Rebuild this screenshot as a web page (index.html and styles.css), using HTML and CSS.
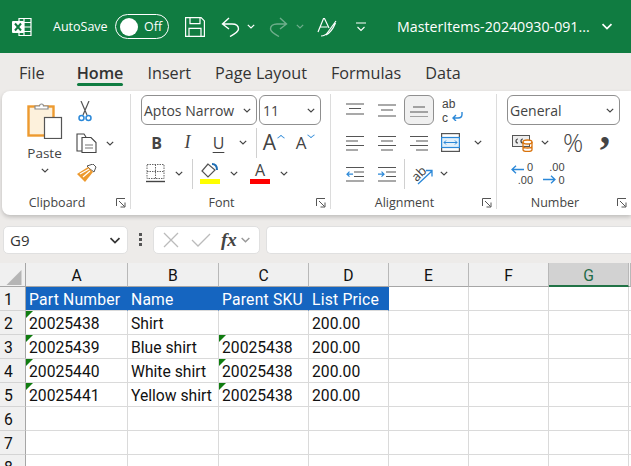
FILE: index.html
```html
<!DOCTYPE html>
<html lang="en">
<head>
    <meta charset="UTF-8">
    <title>MasterItems - Excel</title>
    <link rel="stylesheet" href="styles.css">
</head>
<body>
    <svg class="defs" width="0" height="0">
        <symbol id="chev" viewBox="0 0 8 5"><path d="M.8.8 4 4 7.2.8" fill="none" stroke="currentColor" stroke-width="1.2"/></symbol>
        <symbol id="launch" viewBox="0 0 10 10"><path d="M.5 8V.5H9M3 3l5.5 5.5M9 4.500v4.500H4.500" fill="none" stroke="#555" stroke-width="1"/></symbol>
    </svg>

    <header class="titlebar">
        <svg class="xl-icon" width="20" height="20" viewBox="0 0 20 20">
            <path d="M7 1.500h12v17H7zM12 1.500v17M12 5.500h7M12 10h7M12 14.500h7" fill="none" stroke="#fff" stroke-width="1.200"/>
            <rect x="0" y="4" width="12" height="12" rx="1" fill="#fff"/>
            <path d="M3 6.500 9 13.500M9 6.500 3 13.500" stroke="#107c41" stroke-width="2"/>
        </svg>
        <span class="autosave">AutoSave</span>
        <div class="toggle"><span class="knob"></span><span>Off</span></div>
        <svg class="save" width="20" height="20" viewBox="0 0 20 20" fill="none" stroke="#fff" stroke-width="1.200">
            <path d="M.6.6h15.500l3.300 3.300v15.500H.6zM5 .6v6h10v-6M4 19.400v-8h12v8"/>
        </svg>
        <svg class="undo" width="19" height="20" viewBox="0 0 19 20" fill="none" stroke="#fff" stroke-width="1.400">
            <path d="M8 1 1.500 7 8 12M1.500 7H11c4 0 6.500 2 6.500 5 0 2-2 4-8.500 7.500"/>
        </svg>
        <svg class="chev-w undo-chev" width="8" height="5"><use href="#chev"/></svg>
        <svg class="redo" width="19" height="20" viewBox="0 0 19 20" fill="none" stroke="#6fae8c" stroke-width="1.400">
            <path d="M11 1l6.500 6L11 12M17.500 7H8C4 7 1.500 9 1.500 12c0 2 2 4 8.500 7.500"/>
        </svg>
        <svg class="chev-dim redo-chev" width="8" height="5"><use href="#chev"/></svg>
        <svg class="draw" width="20" height="20" viewBox="0 0 20 20" fill="none" stroke="#fff" stroke-width="1.200">
            <path d="M1 15 6.500 1.500h1L12 11M3.500 10h7M4 19c3 0 5-1 7-4l8-11M9 18c4-2 7-6 9.500-12"/>
        </svg>
        <svg class="qat" width="12" height="10" viewBox="0 0 12 10" fill="none" stroke="#fff" stroke-width="1.100">
            <path d="M1 1h10M2.500 5 6 8.500 9.500 5"/>
        </svg>
        <span class="filename">MasterItems-20240930-091...</span>
        <svg class="chev-w file-chev" width="12" height="7"><use href="#chev"/></svg>
    </header>

    <nav class="tabs">
        <span>File</span>
        <span class="tab-active">Home</span>
        <span>Insert</span>
        <span>Page Layout</span>
        <span>Formulas</span>
        <span>Data</span>
    </nav>

    <section class="ribbon">
        <div class="group group-clip">
            <div class="clip-body">
                <div class="paste">
                    <svg width="36" height="38" viewBox="0 0 36 38">
                        <rect x="1.500" y="5.500" width="25" height="29" fill="#fdf1dc" stroke="#ed9a2f" stroke-width="2.400"/>
                        <path d="M8 8V5h4.500a2 2 0 0 1 4 0H21v3z" fill="#fff" stroke="#8a8a8a" stroke-width="1.200"/>
                        <rect x="17.500" y="16.500" width="17" height="21" fill="#fff" stroke="#555" stroke-width="1.200"/>
                    </svg>
                    <span class="paste-label">Paste</span>
                    <svg class="chev" width="8" height="5"><use href="#chev"/></svg>
                </div>
                <div class="clip-tools">
                    <svg class="cut" width="14" height="21" viewBox="0 0 14 21" fill="none">
                        <path d="M3 0l6 14M11 0 5 14" stroke="#555" stroke-width="1.200"/>
                        <circle cx="3.500" cy="17" r="2.500" stroke="#2b88d8" stroke-width="1.500"/>
                        <circle cx="10.500" cy="17" r="2.500" stroke="#2b88d8" stroke-width="1.500"/>
                    </svg>
                    <div class="copy-row">
                        <svg width="21" height="20" viewBox="0 0 21 20" fill="none" stroke="#444" stroke-width="1.100">
                            <path d="M6 18H1V1h7l2 3"/>
                            <path d="M6 4.500h9l5 5v10H6z" fill="#fff"/>
                            <path d="M9 12h8M9 15h8" stroke="#777"/>
                        </svg>
                        <svg class="chev" width="8" height="5"><use href="#chev"/></svg>
                    </div>
                    <svg class="brush" width="21" height="19" viewBox="0 0 21 19">
                        <path d="M14 5l-3-3 6-2 3 3-2 5z" fill="#fff" stroke="#555"/>
                        <path d="M12 3 1 10l8 8 8-10z" fill="#ed9a2f"/>
                        <path d="M4 10l9-5M7 13l7-6" stroke="#fff" stroke-width="1.200"/>
                    </svg>
                </div>
            </div>
            <div class="group-foot"><span class="group-label">Clipboard</span><svg class="launch" width="10" height="10"><use href="#launch"/></svg></div>
        </div>

        <div class="group group-font">
            <div class="select-row">
                <div class="select sel-font"><span>Aptos Narrow</span><svg width="8" height="5"><use href="#chev"/></svg></div>
                <div class="select sel-size"><span>11</span><svg width="8" height="5"><use href="#chev"/></svg></div>
            </div>
            <div class="tool-row font-row2">
                <b class="glyph">B</b>
                <i class="glyph glyph-i">I</i>
                <span class="glyph glyph-u">U</span>
                <svg width="8" height="5"><use href="#chev"/></svg>
                <span></span>
                <span class="sep"></span>
                <span class="grow">A<em class="up"></em></span>
                <span class="shrink">A<em class="down"></em></span>
            </div>
            <div class="tool-row font-row3">
                <svg width="19" height="19" viewBox="0 0 19 19" fill="none" stroke="#666">
                    <path d="M1 .5h17v14H1zM9.500 .5v14M1 7.500h17" stroke-dasharray="1.500 1"/>
                    <path d="M0 17.500h19" stroke="#444" stroke-width="1.400"/>
                </svg>
                <svg width="8" height="5"><use href="#chev"/></svg>
                <span></span>
                <span class="sep"></span>
                <span class="color-btn">
                    <svg width="18" height="15" viewBox="0 0 18 15" fill="none">
                        <path d="M7 1 1 8l6 6 7-7z" stroke="#555" stroke-width="1.200"/>
                        <path d="M11 1c3 0 5 2 5 6" stroke="#1f6fb5" stroke-width="2"/>
                    </svg>
                    <span class="swatch swatch-fill"></span>
                </span>
                <svg width="8" height="5"><use href="#chev"/></svg>
                <span class="color-btn">
                    <span class="fc-a">A</span>
                    <span class="swatch swatch-font"></span>
                </span>
                <svg width="8" height="5"><use href="#chev"/></svg>
            </div>
            <div class="group-foot"><span class="group-label">Font</span><svg class="launch" width="10" height="10"><use href="#launch"/></svg></div>
        </div>

        <div class="group group-align">
            <div class="tool-row align-row1">
                <svg width="18" height="14" viewBox="0 0 18 14" stroke="#555" stroke-width="1.200"><path d="M0 1h18M3 5.500h12M0 11h18"/></svg>
                <svg width="18" height="14" viewBox="0 0 18 14" stroke="#555" stroke-width="1.200"><path d="M0 2h18M3 7h12M0 13h18"/></svg>
                <span class="pressed"><svg width="18" height="14" viewBox="0 0 18 14" stroke="#555" stroke-width="1.200"><path d="M3 4h12M0 9h18M0 14h18"/></svg></span>
                <span class="wrap"><span class="wrap-text">ab<br>c</span>
                    <svg class="wrap-arrow" width="11" height="9" viewBox="0 0 11 9" fill="none" stroke="#2b88d8" stroke-width="1.400"><path d="M10 0v2.500C10 5 8 6 6 6H1M4 3 1 6l3 3"/></svg>
                </span>
            </div>
            <div class="tool-row align-row2">
                <svg width="18" height="16" viewBox="0 0 18 16" stroke="#555" stroke-width="1.200"><path d="M0 1.500h18M0 6h12M0 10.500h18M0 15h12"/></svg>
                <svg width="18" height="16" viewBox="0 0 18 16" stroke="#555" stroke-width="1.200"><path d="M0 1.500h18M3 6h12M0 10.500h18M3 15h12"/></svg>
                <svg width="18" height="16" viewBox="0 0 18 16" stroke="#555" stroke-width="1.200"><path d="M0 1.500h18M6 6h12M0 10.500h18M6 15h12"/></svg>
                <svg width="19" height="19" viewBox="0 0 19 19" fill="none">
                    <rect x=".6" y=".6" width="17.800" height="17.800" stroke="#555" stroke-width="1.200"/>
                    <rect x=".6" y="4.500" width="17.800" height="10" fill="#e3f0fa" stroke="#2b88d8" stroke-width="1.200"/>
                    <path d="M3 9.500h13M5 7.500l-2 2 2 2M14 7.500l2 2-2 2" stroke="#2b88d8"/>
                </svg>
                <svg width="8" height="5"><use href="#chev"/></svg>
            </div>
            <div class="tool-row align-row3">
                <svg width="18" height="16" viewBox="0 0 18 16" fill="none" stroke="#555" stroke-width="1.200"><path d="M0 1.500h18M8 6h10M8 10.500h10M0 15h18"/><path d="M7 8.200H1M3.500 5.700 1 8.200l2.500 2.500" stroke="#2b88d8"/></svg>
                <svg width="18" height="16" viewBox="0 0 18 16" fill="none" stroke="#555" stroke-width="1.200"><path d="M0 1.500h18M8 6h10M8 10.500h10M0 15h18"/><path d="M0 8.200h6M3.500 5.700 6 8.200l-2.500 2.500" stroke="#2b88d8"/></svg>
                <span class="sep"></span>
                <span class="orient"><span class="orient-text">ab</span>
                    <svg class="orient-arrow" width="16" height="16" viewBox="0 0 16 16" fill="none" stroke="#2b88d8" stroke-width="1.300"><path d="M1 15 15 2M9 1.500h6v6"/></svg>
                </span>
                <svg width="8" height="5"><use href="#chev"/></svg>
            </div>
            <div class="group-foot"><span class="group-label">Alignment</span><svg class="launch" width="10" height="10"><use href="#launch"/></svg></div>
        </div>

        <div class="group group-num">
            <div class="select-row">
                <div class="select sel-format"><span>General</span><svg width="8" height="5"><use href="#chev"/></svg></div>
            </div>
            <div class="tool-row num-row2">
                <svg width="21" height="18" viewBox="0 0 21 18" fill="none">
                    <rect x=".5" y="1.500" width="17" height="11" fill="#eee" stroke="#555"/>
                    <path d="M6 5a2 2 0 1 0 0 4M11 5a2 2 0 1 0 0 4" stroke="#444" stroke-width="1.200"/>
                    <ellipse cx="15.500" cy="8" rx="4.500" ry="2" fill="#fff" stroke="#d9730d" stroke-width="1.300"/>
                    <path d="M11 8v7.500c0 1 2 2 4.500 2s4.500-1 4.500-2V8M11 12c0 1 2 2 4.500 2s4.500-1 4.500-2" fill="none" stroke="#d9730d" stroke-width="1.300"/>
                </svg>
                <svg width="8" height="5"><use href="#chev"/></svg>
                <span class="percent">%</span>
                <span class="comma">,</span>
            </div>
            <div class="tool-row num-row3">
                <span class="dec"><span class="dec-top">0</span><span class="dec-bottom">.00</span>
                    <svg class="dec-arrow" width="13" height="9" viewBox="0 0 13 9" fill="none" stroke="#2b88d8" stroke-width="1.300"><path d="M13 4.500H1M5 .7 1 4.500l4 3.800"/></svg>
                </span>
                <span class="dec"><span class="dec-top">.00</span><span class="dec-bottom">0</span>
                    <svg class="dec-arrow dec-arrow-r" width="13" height="9" viewBox="0 0 13 9" fill="none" stroke="#2b88d8" stroke-width="1.300"><path d="M0 4.500h12M8 .7l4 3.800-4 3.800"/></svg>
                </span>
            </div>
            <div class="group-foot"><span class="group-label">Number</span><svg class="launch" width="10" height="10"><use href="#launch"/></svg></div>
        </div>
    </section>

    <section class="formulabar">
        <div class="namebox"><span>G9</span><svg width="12" height="7"><use href="#chev"/></svg></div>
        <div class="dots"><span></span><span></span><span></span></div>
        <div class="fxbox">
            <svg width="16" height="16" viewBox="0 0 16 16" stroke="#bbb" stroke-width="1.300"><path d="M1 1l14 14M15 1 1 15"/></svg>
            <svg width="20" height="14" viewBox="0 0 20 14" fill="none" stroke="#bbb" stroke-width="1.300"><path d="M1 7l6 6L19 1"/></svg>
            <span class="fx">fx</span>
            <svg class="fx-chev" width="11" height="6"><use href="#chev"/></svg>
        </div>
        <div class="formula-input"></div>
    </section>

    <main class="sheet">
        <div class="corner"><svg width="16" height="16" viewBox="0 0 16 16"><path d="M16 0v16H0z" fill="#b5b5b5"/></svg></div>
        <div class="col">A</div><div class="col">B</div><div class="col">C</div><div class="col">D</div><div class="col">E</div><div class="col">F</div><div class="col col-sel">G</div><div class="col"></div>

        <div class="row">1</div>
        <div class="cell head">Part Number</div><div class="cell head">Name</div><div class="cell head">Parent SKU</div><div class="cell head">List Price</div><div class="cell"></div><div class="cell"></div><div class="cell"></div><div class="cell"></div>

        <div class="row">2</div>
        <div class="cell flag">20025438</div><div class="cell">Shirt</div><div class="cell"></div><div class="cell">200.00</div><div class="cell"></div><div class="cell"></div><div class="cell"></div><div class="cell"></div>

        <div class="row">3</div>
        <div class="cell flag">20025439</div><div class="cell">Blue shirt</div><div class="cell flag">20025438</div><div class="cell">200.00</div><div class="cell"></div><div class="cell"></div><div class="cell"></div><div class="cell"></div>

        <div class="row">4</div>
        <div class="cell flag">20025440</div><div class="cell">White shirt</div><div class="cell flag">20025438</div><div class="cell">200.00</div><div class="cell"></div><div class="cell"></div><div class="cell"></div><div class="cell"></div>

        <div class="row">5</div>
        <div class="cell flag">20025441</div><div class="cell">Yellow shirt</div><div class="cell flag">20025438</div><div class="cell">200.00</div><div class="cell"></div><div class="cell"></div><div class="cell"></div><div class="cell"></div>

        <div class="row">6</div>
        <div class="cell"></div><div class="cell"></div><div class="cell"></div><div class="cell"></div><div class="cell"></div><div class="cell"></div><div class="cell"></div><div class="cell"></div>

        <div class="row">7</div>
        <div class="cell"></div><div class="cell"></div><div class="cell"></div><div class="cell"></div><div class="cell"></div><div class="cell"></div><div class="cell"></div><div class="cell"></div>

        <div class="row">8</div>
        <div class="cell"></div><div class="cell"></div><div class="cell"></div><div class="cell"></div><div class="cell"></div><div class="cell"></div><div class="cell"></div><div class="cell"></div>
    </main>
</body>
</html>
```
FILE: styles.css
```css
* {
    box-sizing: border-box;
}
html, body {
    margin: 0;
    height: 466px;
    overflow: hidden;
}
body {
    font-family: "Open Sans", "Noto Sans", sans-serif;
    background: #edebe9;
    color: #333;
}
.defs {
    position: absolute;
}
svg {
    flex-shrink: 0;
    display: block;
}

/* title bar */
.titlebar {
    height: 53px;
    background: #107c41;
    color: #fff;
    display: flex;
    align-items: center;
    padding-left: 12px;
    font-size: 12.500px;
}
.autosave {
    margin-left: 21px;
    width: 54px;
    font-size: 12.500px;
    white-space: nowrap;
}
.toggle {
    margin-left: 8px;
    width: 54px;
    height: 25px;
    border: 1px solid #fff;
    border-radius: 13px;
    display: flex;
    align-items: center;
    padding-left: 4px;
    gap: 6px;
}
.knob {
    width: 18px;
    height: 18px;
    border-radius: 50%;
    background: #fff;
}
.save {
    margin-left: 16px;
}
.undo {
    margin-left: 16px;
}
.chev-w {
    color: #fff;
}
.chev-dim {
    color: #6fae8c;
}
.undo-chev {
    margin-left: 7px;
}
.redo {
    margin-left: 14px;
}
.redo-chev {
    margin-left: 8px;
}
.draw {
    margin-left: 13px;
}
.qat {
    margin-left: 18px;
}
.filename {
    margin-left: 30px;
    width: 192px;
    font-size: 14.200px;
    white-space: nowrap;
}
.file-chev {
    margin-left: 12px;
}

/* tabs */
.tabs {
    height: 38px;
    display: flex;
    align-items: center;
    gap: 24px;
    padding: 2px 0 0 19px;
    font-size: 16.200px;
}
.tabs span:first-child {
    margin-right: 8px;
}
.tab-active {
    position: relative;
    font-weight: 600;
}
.tab-active::after {
    content: "";
    position: absolute;
    left: 0;
    right: 0;
    bottom: -2px;
    height: 3px;
    border-radius: 2px;
    background: #107c41;
}

/* ribbon */
.ribbon {
    margin-left: 2px;
    height: 124px;
    background: #fff;
    border-radius: 8px 0 0 8px;
    box-shadow: 0 2px 4px rgba(0, 0, 0, .2);
    display: flex;
    color: #444;
}
.group {
    position: relative;
    display: flex;
    flex-direction: column;
    border-right: 1px solid #dcdcdc;
    margin: 3px 0 6px;
    padding-top: 1px;
}
.group-clip {
    width: 129px;
}
.group-font {
    width: 200px;
    padding-left: 10px;
}
.group-align {
    width: 166px;
    padding-left: 15px;
}
.group-num {
    width: 134px;
    padding-left: 10px;
    border-right: 0;
}
.group-foot {
    position: absolute;
    left: 0;
    right: 0;
    bottom: -3px;
    height: 20px;
    display: flex;
    align-items: center;
    justify-content: center;
    padding-right: 18px;
}
.group-label {
    font-size: 12.500px;
}
.launch {
    position: absolute;
    right: 4px;
    top: 6px;
}

/* clipboard */
.clip-body {
    display: flex;
    padding: 6px 0 0 22px;
}
.paste {
    width: 41px;
    display: flex;
    flex-direction: column;
    align-items: center;
    font-size: 13.500px;
}
.paste-label {
    margin-top: 5px;
}
.paste .chev {
    margin-top: 6px;
}
.clip-tools {
    margin-left: 11px;
    display: flex;
    flex-direction: column;
    align-items: flex-start;
    gap: 11px;
}
.cut {
    margin-left: 2px;
}
.copy-row {
    display: flex;
    align-items: center;
    gap: 9px;
}

/* rows of small tools */
.select-row {
    display: flex;
    gap: 2px;
    height: 30px;
}
.select {
    height: 30px;
    border: 1px solid #8f8f8f;
    border-radius: 6px;
    display: flex;
    align-items: center;
    justify-content: space-between;
    padding: 0 5px 0 2px;
    font-size: 14px;
}
.sel-font {
    width: 116px;
}
.sel-size {
    width: 62px;
    padding-left: 3px;
}
.sel-format {
    width: 113px;
}
.tool-row {
    display: grid;
    height: 31px;
    justify-items: center;
    align-items: center;
}
.font-row2 {
    grid-template-columns: 31px 31px 31px 18px 4px 1px 33px 30px;
    margin-top: 2px;
}
.font-row3 {
    grid-template-columns: 28px 20px 3px 1px 34px 14px 38px 10px;
}
.sep {
    width: 1px;
    height: 30px;
    background: #d0d0d0;
}
.glyph {
    font-size: 16px;
    font-style: normal;
}
.glyph-i {
    font-family: "Liberation Serif", serif;
    font-style: italic;
    font-size: 18px;
}
.glyph-u {
    text-decoration: underline;
    text-underline-offset: 3px;
}
.grow, .shrink {
    position: relative;
    font-size: 21px;
    line-height: 1;
    padding-right: 8px;
}
.shrink {
    font-size: 17px;
}
.up, .down {
    position: absolute;
    right: 0;
    top: 3px;
    width: 6px;
    height: 6px;
    border-left: 1.500px solid #2b88d8;
    border-top: 1.500px solid #2b88d8;
    transform: scale(.9, .7) rotate(45deg);
}
.down {
    top: -2px;
    transform: scale(.9, .7) rotate(225deg);
}
.color-btn {
    display: flex;
    flex-direction: column;
    align-items: center;
    gap: 1px;
}
.fc-a {
    font-size: 16px;
    line-height: 15px;
}
.swatch {
    width: 20px;
    height: 5px;
}
.swatch-fill {
    background: #ffff00;
}
.swatch-font {
    background: #ff0000;
}

/* alignment */
.align-row1 {
    grid-template-columns: 32px 32px 32px 34px;
    margin-left: -7px;
    height: 30px;
}
.align-row2 {
    grid-template-columns: 32px 32px 32px 31px 24px;
    margin: 2px 0 0 -7px;
}
.align-row3 {
    grid-template-columns: 32px 32px 2px 32px 14px;
    margin-left: -7px;
}
.pressed {
    width: 30px;
    height: 30px;
    border: 1px solid #8f8f8f;
    border-radius: 6px;
    background: #f0f0f0;
    display: flex;
    align-items: center;
    justify-content: center;
}
.wrap {
    position: relative;
    width: 20px;
    height: 26px;
}
.wrap-text {
    font-family: "Liberation Sans", sans-serif;
    font-size: 12px;
    line-height: 14px;
    display: block;
}
.wrap-arrow {
    position: absolute;
    right: -1px;
    bottom: 2px;
}
.orient {
    position: relative;
    width: 22px;
    height: 22px;
}
.orient-text {
    display: block;
    font-size: 13px;
    line-height: 16px;
    transform: rotate(-45deg);
}
.orient-arrow {
    position: absolute;
    right: -1px;
    bottom: 0;
}

/* number */
.group-num .select-row {
    margin-bottom: 2px;
}
.num-row2 {
    grid-template-columns: 30px 16px 40px 24px;
    justify-content: start;
}
.percent {
    font-size: 25px;
    font-weight: 300;
    line-height: 1;
}
.comma {
    font-family: "Liberation Serif", serif;
    font-size: 42px;
    line-height: 1;
    font-weight: 700;
    height: 31px;
    transform: translateY(-19px);
}
.num-row3 {
    grid-template-columns: 30px 33px;
    justify-content: start;
}
.dec {
    position: relative;
    width: 22px;
    height: 26px;
    font-family: "Liberation Sans", sans-serif;
    font-size: 11px;
    line-height: 13px;
}
.dec-top {
    position: absolute;
    right: 0;
    top: 0;
}
.dec-bottom {
    position: absolute;
    right: 0;
    bottom: 0;
}
.dec-arrow {
    position: absolute;
    left: 0;
    top: 4px;
}
.dec-arrow-r {
    top: 14px;
}

/* formula bar */
.formulabar {
    height: 43px;
    padding-top: 11px;
    display: flex;
    align-items: flex-start;
}
.namebox {
    margin-left: 3px;
    width: 125px;
    height: 28px;
    background: #fff;
    border-radius: 5px;
    border: 1px solid #e0e0e0;
    display: flex;
    align-items: center;
    justify-content: space-between;
    padding: 0 6px;
    font-size: 15px;
}
.dots {
    margin: 7px 0 0 11px;
    width: 3px;
    display: flex;
    flex-direction: column;
    gap: 2px;
}
.dots span {
    width: 3px;
    height: 3px;
    background: #555;
}
.fxbox {
    margin-left: 11px;
    width: 107px;
    height: 28px;
    background: #fff;
    border: 1px solid #e0e0e0;
    border-radius: 5px;
    display: flex;
    align-items: center;
    padding-left: 9px;
    color: #999;
}
.fxbox svg + svg {
    margin-left: 12px;
}
.fx {
    margin-left: 10px;
    font-family: "Liberation Serif", serif;
    font-style: italic;
    font-weight: 700;
    font-size: 19px;
    color: #444;
}
.fxbox .fx-chev {
    margin-left: 3px;
}
.formula-input {
    margin-left: 6px;
    flex: 1;
    height: 28px;
    background: #fff;
    border: 1px solid #e0e0e0;
    border-right: 0;
    border-radius: 5px 0 0 5px;
}

/* sheet */
.sheet {
    margin-top: 5px;
    background: #fff;
    display: grid;
    grid-template-columns: 26px 102px 91px 90px 80px 80px 80px 80px 2px;
    grid-auto-rows: 24px;
    font-family: Roboto, sans-serif;
    font-size: 15.700px;
    color: #111;
}
.corner {
    background: #f0f0f0;
    border-right: 1px solid #a6a6a6;
    border-bottom: 1px solid #a6a6a6;
    padding: 7px 0 0 6px;
}
.corner svg {
    width: 16px;
    height: 15px;
}
.col {
    background: #f0f0f0;
    border-right: 1px solid #b8b8b8;
    border-bottom: 1px solid #a6a6a6;
    display: flex;
    align-items: center;
    justify-content: center;
    padding-top: 2px;
}
.col-sel {
    background: #d2d2d2;
    border-bottom: 2px solid #217346;
    color: #1f6b47;
}
.row {
    background: #f0f0f0;
    border-right: 1px solid #a6a6a6;
    border-bottom: 1px solid #d4d4d4;
    display: flex;
    align-items: center;
    padding: 2px 0 0 4px;
}
.cell {
    position: relative;
    border-right: 1px solid #dadada;
    border-bottom: 1px solid #dadada;
    padding-left: 3px;
    line-height: 26px;
    white-space: nowrap;
}
.head {
    background: #1565c0;
    color: #fff;
    border-right-color: #1565c0;
    letter-spacing: .2px;
}
.flag::before {
    content: "";
    position: absolute;
    left: 0;
    top: 0;
    border-top: 7px solid #107c10;
    border-right: 7px solid transparent;
}
```
